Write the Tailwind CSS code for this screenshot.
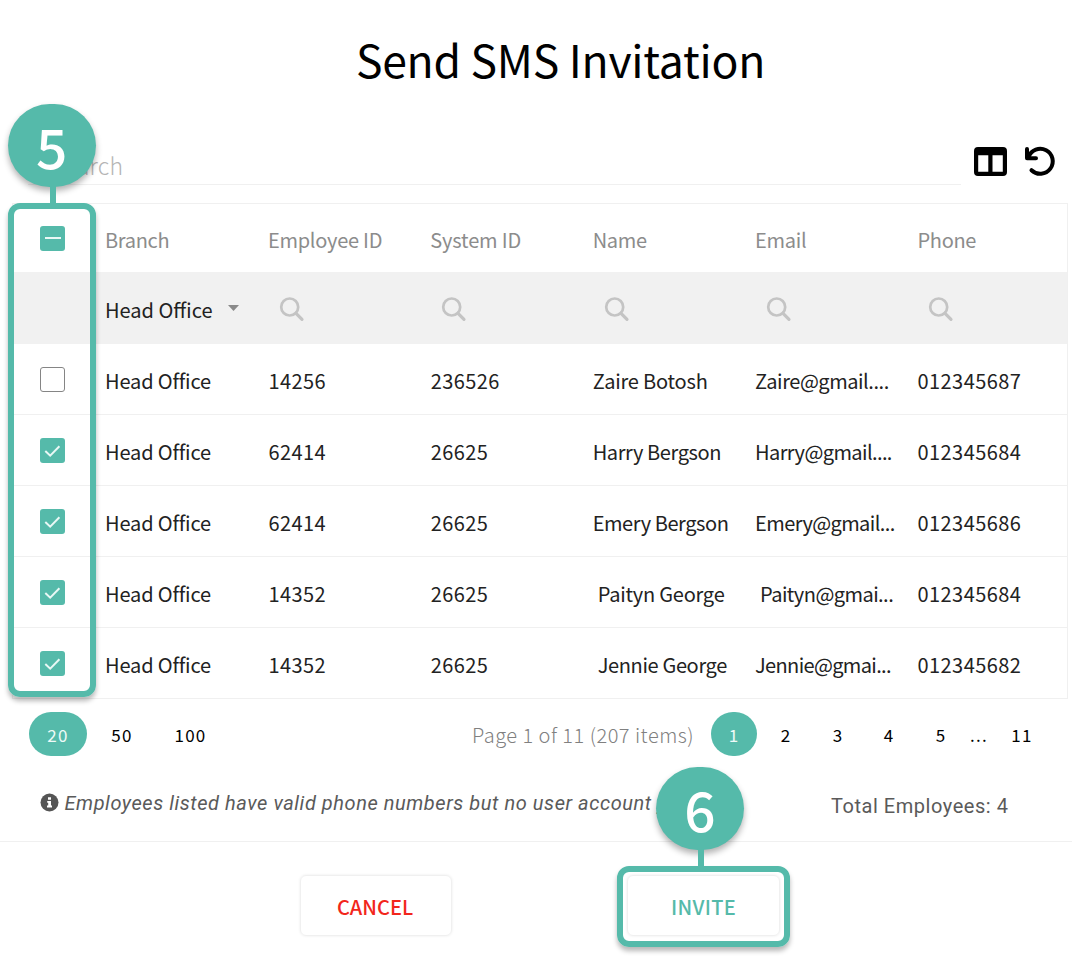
<!DOCTYPE html>
<html lang="en">
  <head>
    <meta charset="UTF-8" />
    <meta name="viewport" content="width=device-width, initial-scale=1.0" />
    <title>Send SMS Invitation</title>
    <script src="https://cdn.jsdelivr.net/npm/@tailwindcss/browser@4"></script>
  </head>
  <body class="relative w-[1072px] h-[963px] overflow-hidden bg-white text-xl text-[#222] font-['Noto_Sans_CJK_SC',sans-serif]">
    <svg class="hidden">
      <symbol id="search" viewBox="0 0 26 26">
        <circle cx="10.7" cy="11" r="8.5" fill="none" stroke="#c4c4c4" stroke-width="2.7" />
        <path d="M17 17.3L23 23.4" stroke="#c4c4c4" stroke-width="3.2" stroke-linecap="round" />
      </symbol>
      <symbol id="check" viewBox="0 0 25 25">
        <path d="M5.3 13L10.2 17.7L19.4 8.3" fill="none" stroke="#e9f8f5" stroke-width="2" />
      </symbol>
    </svg>

    <h1 class="h-[138px] pt-[39px] pl-[49px] text-center text-[44.5px] leading-10 tracking-[-0.25px] text-black">Send SMS Invitation</h1>

    <!-- Search bar -->
    <div class="flex h-[47px] pl-7">
      <div class="w-[933px] pl-[23px] border-b border-[#f0f0f0] text-[23px] leading-[54px] tracking-[0.2px] font-light text-[#b5b5b5]">Search</div>
      <div class="flex pl-[13px] pt-[7px] gap-[15px]">
        <svg class="w-[33px] h-[32px]" viewBox="0 0 33 32">
          <path fill="#000" fill-rule="evenodd" d="M4 2H29A4 4 0 0 1 33 6V27A4 4 0 0 1 29 31H4A4 4 0 0 1 0 27V6A4 4 0 0 1 4 2ZM4.2 10.2V26.8H14.3V10.2ZM18.5 10.2V26.8H28.8V10.2Z" />
        </svg>
        <svg class="w-9 h-8" viewBox="0 0 36 32" fill="none" stroke="#000" stroke-width="4" stroke-linecap="round" stroke-linejoin="round">
          <path d="M5 4V13.3H14" />
          <path d="M6.5 12A12.5 12.5 0 1 1 9.5 25.2" />
        </svg>
      </div>
    </div>

    <!-- Employees table -->
    <div class="mt-[18px] ml-3 w-[1056px] border border-[#f0f0f0]">
      <div class="grid grid-cols-[77px_repeat(6,162.4px)] h-[68px] items-center text-[#8c8c8c] tracking-[-0.15px]">
        <div class="ml-[27px] flex w-[25px] h-[25px] items-center justify-center rounded-[3px] bg-[#55baaa]">
          <div class="w-4 h-0.5 bg-[#e9f8f5]"></div>
        </div>
        <div class="pl-[15px] pt-[3px] tracking-[-0.3px]">Branch</div>
        <div class="pl-[15.5px] pt-[3px] tracking-[-0.25px]">Employee ID</div>
        <div class="pl-[15.5px] pt-[3px]">System ID</div>
        <div class="pl-[15.5px] pt-[3px] tracking-[-0.3px]">Name</div>
        <div class="pl-[15.5px] pt-[3px] tracking-[-0.3px]">Email</div>
        <div class="pl-[15.5px] pt-[3px] tracking-[-0.3px]">Phone</div>
      </div>
      <div class="grid grid-cols-[77px_repeat(6,162.4px)] h-[72px] items-center bg-[#f1f1f1]">
        <div></div>
        <div class="flex items-center pl-[15px] pt-[3px]">Head Office
          <svg class="ml-4 -mt-[3px] w-[11px] h-[6px]" viewBox="0 0 11 6"><path d="M0 0H11L5.5 6Z" fill="#8a8a8a" /></svg>
        </div>
        <div class="pl-[27px] pt-0.5"><svg class="w-[26px] h-[26px]"><use href="#search" /></svg></div>
        <div class="pl-[26.5px] pt-0.5"><svg class="w-[26px] h-[26px]"><use href="#search" /></svg></div>
        <div class="pl-[26.5px] pt-0.5"><svg class="w-[26px] h-[26px]"><use href="#search" /></svg></div>
        <div class="pl-[26.5px] pt-0.5"><svg class="w-[26px] h-[26px]"><use href="#search" /></svg></div>
        <div class="pl-[26.5px] pt-0.5"><svg class="w-[26px] h-[26px]"><use href="#search" /></svg></div>
      </div>
      <div class="grid grid-cols-[77px_repeat(6,162.4px)] h-[71px] items-center border-b border-[#f0f0f0]">
        <div class="ml-[27px] mt-px w-[25px] h-[25px] rounded-[3px] border border-[#858585]"></div>
        <div class="pl-[15px] pt-1 tracking-[-0.15px]">Head Office</div>
        <div class="pl-4 pt-1 tracking-[0.4px]">14256</div>
        <div class="pl-4 pt-1 tracking-[0.4px]">236526</div>
        <div class="pl-[15.5px] pt-1 tracking-[-0.2px]">Zaire Botosh</div>
        <div class="pl-[15.5px] pt-1 tracking-[-0.45px]">Zaire@gmail....</div>
        <div class="pl-[15.5px] pt-1 tracking-[0.45px]">012345687</div>
      </div>
      <div class="grid grid-cols-[77px_repeat(6,162.4px)] h-[71px] items-center border-b border-[#f0f0f0]">
        <div class="ml-[27px] mt-px w-[25px] h-[25px] rounded-[3px] bg-[#55baaa]"><svg class="w-[25px] h-[25px]"><use href="#check" /></svg></div>
        <div class="pl-[15px] pt-1 tracking-[-0.15px]">Head Office</div>
        <div class="pl-4 pt-1 tracking-[0.4px]">62414</div>
        <div class="pl-4 pt-1 tracking-[0.4px]">26625</div>
        <div class="pl-[15.5px] pt-1 tracking-[-0.4px]">Harry Bergson</div>
        <div class="pl-[15.5px] pt-1 tracking-[-0.6px]">Harry@gmail....</div>
        <div class="pl-[15.5px] pt-1 tracking-[0.45px]">012345684</div>
      </div>
      <div class="grid grid-cols-[77px_repeat(6,162.4px)] h-[71px] items-center border-b border-[#f0f0f0]">
        <div class="ml-[27px] mt-px w-[25px] h-[25px] rounded-[3px] bg-[#55baaa]"><svg class="w-[25px] h-[25px]"><use href="#check" /></svg></div>
        <div class="pl-[15px] pt-1 tracking-[-0.15px]">Head Office</div>
        <div class="pl-4 pt-1 tracking-[0.4px]">62414</div>
        <div class="pl-4 pt-1 tracking-[0.4px]">26625</div>
        <div class="pl-[15.5px] pt-1 tracking-[-0.43px]">Emery Bergson</div>
        <div class="pl-[15.5px] pt-1 tracking-[-0.6px]">Emery@gmail...</div>
        <div class="pl-[15.5px] pt-1 tracking-[0.45px]">012345686</div>
      </div>
      <div class="grid grid-cols-[77px_repeat(6,162.4px)] h-[71px] items-center border-b border-[#f0f0f0]">
        <div class="ml-[27px] mt-px w-[25px] h-[25px] rounded-[3px] bg-[#55baaa]"><svg class="w-[25px] h-[25px]"><use href="#check" /></svg></div>
        <div class="pl-[15px] pt-1 tracking-[-0.15px]">Head Office</div>
        <div class="pl-4 pt-1 tracking-[0.4px]">14352</div>
        <div class="pl-4 pt-1 tracking-[0.4px]">26625</div>
        <div class="pl-[20.5px] pt-1 tracking-[-0.22px]">Paityn George</div>
        <div class="pl-[20.5px] pt-1 tracking-[-0.55px]">Paityn@gmai...</div>
        <div class="pl-[15.5px] pt-1 tracking-[0.45px]">012345684</div>
      </div>
      <div class="grid grid-cols-[77px_repeat(6,162.4px)] h-[70px] items-center">
        <div class="ml-[27px] w-[25px] h-[25px] rounded-[3px] bg-[#55baaa]"><svg class="w-[25px] h-[25px]"><use href="#check" /></svg></div>
        <div class="pl-[15px] pt-1 tracking-[-0.15px]">Head Office</div>
        <div class="pl-4 pt-1 tracking-[0.4px]">14352</div>
        <div class="pl-4 pt-1 tracking-[0.4px]">26625</div>
        <div class="pl-[20.5px] pt-1 tracking-[-0.35px]">Jennie George</div>
        <div class="pl-[15.5px] pt-1 tracking-[-0.65px]">Jennie@gmai...</div>
        <div class="pl-[15.5px] pt-1 tracking-[0.45px]">012345682</div>
      </div>
    </div>

    <!-- Pagination -->
    <div class="mt-[13px] pl-[29px] flex h-11 items-center text-[17px] tracking-[1.3px] text-black text-center">
      <div class="w-[58px] h-11 leading-[46px] rounded-full bg-[#55baaa] text-[#eefaf8]">20</div>
      <div class="w-[70px] pt-0.5">50</div>
      <div class="w-[67px] pt-0.5">100</div>
      <div class="ml-[248px] w-[239px] pt-0.5 text-left text-xl font-light tracking-[0.5px] text-[#808080]">Page 1 of 11 (207 items)</div>
      <div class="w-[46px] h-11 leading-[46px] rounded-full bg-[#55baaa] text-[#eefaf8]">1</div>
      <div class="ml-[6px] w-[46px] pt-0.5">2</div>
      <div class="ml-[6px] w-[46px] pt-0.5">3</div>
      <div class="ml-[5px] w-[46px] pt-0.5">4</div>
      <div class="ml-[6px] w-[46px] pt-0.5">5</div>
      <div class="w-[30px] pt-0.5">...</div>
      <div class="ml-[5px] w-[46px] pt-0.5">11</div>
    </div>

    <div class="flex h-[86px] items-start pt-[36px] pl-[40px] border-b border-[#f0f0f0] font-[Roboto,sans-serif] text-[#5a5a5a] leading-5">
      <svg class="mt-px w-[19px] h-[19px]" viewBox="0 0 19 19">
        <circle cx="9.5" cy="9.5" r="9" fill="#555" />
        <path fill="#fff" d="M8 4.2H11V6.8H8ZM7.2 8H11V12.6H12V14.4H7V12.6H8.2V9.8H7.2Z" />
      </svg>
      <div class="ml-[5.5px] w-[766.5px] pt-px italic tracking-[0.56px]">Employees listed have valid phone numbers but no user account yet</div>
      <div class="pt-1 tracking-[0.54px] whitespace-nowrap">Total Employees: 4</div>
    </div>

    <div class="flex pt-[33px] pl-[300px] gap-[175px] font-medium">
      <button class="w-[152px] h-[61px] pt-[3px] pr-0.5 rounded-md border border-[#f0f0f0] shadow-[0_0_3px_rgba(0,0,0,0.08)] text-[#f2261c]">CANCEL</button>
      <button class="w-[153px] h-[61px] pt-[3px] rounded-md border border-[#f0f0f0] shadow-[0_0_3px_rgba(0,0,0,0.08)] tracking-[0.3px] text-[#55baaa]">INVITE</button>
    </div>

    <!-- Step 5 callout -->
    <div class="absolute left-[8px] top-[203px] w-[87.5px] h-[494px] rounded-xl border-6 border-[#55baaa] shadow-[0_4px_5px_rgba(0,0,0,0.28)]"></div>
    <div class="absolute left-[8px] top-[104px] w-[87.5px] h-[83px] rounded-full bg-[#55baaa] shadow-[0_4px_6px_rgba(0,0,0,0.3)] text-center text-[55px] leading-[82px] font-medium text-white">5</div>
    <div class="absolute left-[50px] top-[186px] w-[5.5px] h-[18px] bg-[#55baaa]"></div>

    <!-- Step 6 callout -->
    <div class="absolute left-[616.5px] top-[865.5px] w-[173px] h-[81.5px] rounded-xl border-6 border-[#55baaa] shadow-[0_4px_5px_rgba(0,0,0,0.28)]"></div>
    <div class="absolute left-[656px] top-[767px] w-[88px] h-[83px] rounded-full bg-[#55baaa] shadow-[0_4px_6px_rgba(0,0,0,0.3)] text-center text-[55px] leading-[82px] font-medium text-white">6</div>
    <div class="absolute left-[698px] top-[849px] w-[5.5px] h-[18px] bg-[#55baaa]"></div>
  </body>
</html>
